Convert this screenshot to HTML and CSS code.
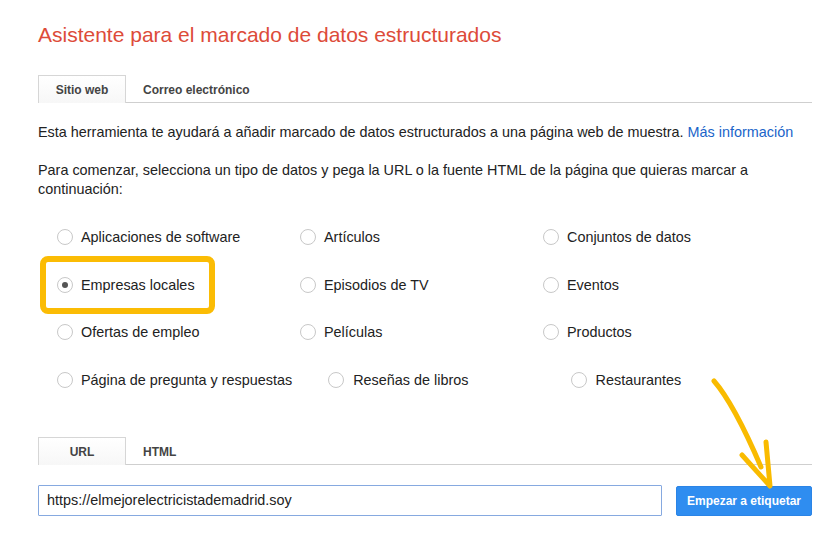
FILE: index.html
```html
<!DOCTYPE html>
<html lang="es">
<head>
<meta charset="utf-8">
<title>Asistente para el marcado de datos estructurados</title>
<link rel="stylesheet" href="styles.css">
</head>
<body>
<div class="page">
  <h1 class="title">Asistente para el marcado de datos estructurados</h1>

  <div class="tabs tabs-top">
    <div class="tab active">Sitio web</div>
    <div class="tab">Correo electrónico</div>
  </div>

  <p class="para first">Esta herramienta te ayudará a añadir marcado de datos estructurados a una página web de muestra. <a class="link" href="#">Más información</a></p>
  <p class="para">Para comenzar, selecciona un tipo de datos y pega la URL o la fuente HTML de la página que quieras marcar a continuación:</p>

  <div class="options">
    <div class="row">
      <label class="opt"><span class="radio"></span>Aplicaciones de software</label>
      <label class="opt"><span class="radio"></span>Artículos</label>
      <label class="opt"><span class="radio"></span>Conjuntos de datos</label>
    </div>
    <div class="row">
      <label class="opt highlighted"><span class="radio checked"></span>Empresas locales<span class="hl-box"></span></label>
      <label class="opt"><span class="radio"></span>Episodios de TV</label>
      <label class="opt"><span class="radio"></span>Eventos</label>
    </div>
    <div class="row">
      <label class="opt"><span class="radio"></span>Ofertas de empleo</label>
      <label class="opt"><span class="radio"></span>Películas</label>
      <label class="opt"><span class="radio"></span>Productos</label>
    </div>
    <div class="row last">
      <label class="opt"><span class="radio"></span>Página de pregunta y respuestas</label>
      <label class="opt"><span class="radio"></span>Reseñas de libros</label>
      <label class="opt"><span class="radio"></span>Restaurantes</label>
    </div>
  </div>

  <div class="tabs tabs-bottom">
    <div class="tab active">URL</div>
    <div class="tab">HTML</div>
  </div>

  <div class="url-row">
    <div class="url-input">https://elmejorelectricistademadrid.soy</div>
    <button class="btn">Empezar a etiquetar</button>
  </div>
</div>

<svg class="arrow" width="840" height="538" viewBox="0 0 840 538">
  <path d="M714 381 C728 397 743 425 761 467" fill="none" stroke="#f9bb00" stroke-width="5" stroke-linecap="round"/>
  <path d="M742 455 L770 486 L766 442" fill="none" stroke="#f9bb00" stroke-width="5" stroke-linecap="round" stroke-linejoin="round"/>
</svg>
</body>
</html>
```

FILE: styles.css
```css
html, body {
  margin: 0;
  padding: 0;
  background: #fff;
}
body {
  font-family: "Liberation Sans", Arial, sans-serif;
  font-size: 14.4px;
  color: #222;
  position: relative;
  width: 840px;
  height: 538px;
  overflow: hidden;
}
.page {
  padding: 0 28px 0 38px;
  display: flex;
  flex-direction: column;
}
.title {
  margin: 22px 0 0 0;
  font-size: 21px;
  font-weight: normal;
  line-height: 26px;
  color: #dd4b39;
}
.tabs {
  display: flex;
  border-bottom: 1px solid #cfcfcf;
  height: 27px;
}
.tabs-top {
  margin-top: 27px;
}
.tab {
  font-size: 12px;
  font-weight: bold;
  color: #444;
  line-height: 26px;
  height: 27px;
  box-sizing: border-box;
  padding: 1px 16px 0 16px;
  border: 1px solid transparent;
  border-bottom: none;
}
.tab.active {
  width: 88px;
  padding: 1px 0 0 0;
  text-align: center;
  border-color: #d6d6d6;
  background: linear-gradient(#fff, #f7f7f7);
  margin-bottom: -1px;
  height: 28px;
}
.para {
  margin: 0;
  line-height: 19px;
}
.para.first {
  margin-top: 20px;
  margin-bottom: 19px;
}
.link {
  color: #1a64c9;
  text-decoration: none;
}
.options {
  margin-top: 28px;
  padding-left: 19px;
  display: flex;
  flex-direction: column;
  gap: 27.6px;
}
.row {
  display: flex;
  height: 20px;
  align-items: center;
}
.opt {
  position: relative;
  width: 243px;
  display: flex;
  align-items: center;
  gap: 8px;
  color: #222;
  line-height: 20px;
}
.row.last .opt:first-child {
  width: 273px;
}
.row.last .opt:nth-child(2) {
  width: 244px;
}
.row.last .opt:nth-child(2),
.row.last .opt:nth-child(3) {
  gap: 9px;
}
.radio {
  width: 14px;
  height: 14px;
  border: 1px solid #c8c8c8;
  border-radius: 50%;
  background: #fff;
  display: inline-flex;
  align-items: center;
  justify-content: center;
  flex: none;
}
.radio.checked::after {
  content: "";
  width: 6px;
  height: 6px;
  border-radius: 50%;
  background: #555;
}
.hl-box {
  position: absolute;
  left: -17px;
  top: -19px;
  width: 175px;
  height: 58px;
  box-sizing: border-box;
  border: 6px solid #fbbc04;
  border-radius: 8px;
  pointer-events: none;
}
.tabs-bottom {
  margin-top: 47px;
}
.url-row {
  margin-top: 20px;
  display: flex;
  align-items: flex-start;
  gap: 14px;
}
.url-input {
  width: 624px;
  height: 31px;
  box-sizing: border-box;
  border: 1px solid #86a9e0;
  border-radius: 1px;
  padding: 0 8px;
  line-height: 29px;
  font-size: 14.4px;
  color: #222;
}
.btn {
  margin-top: 1px;
  width: 136px;
  height: 30px;
  border: 1px solid #2b84e6;
  border-radius: 2px;
  background: #2f8df0;
  color: #fff;
  font-family: "Liberation Sans", Arial, sans-serif;
  font-size: 12px;
  font-weight: bold;
  padding: 0;
}
.arrow {
  position: absolute;
  left: 0;
  top: 0;
  pointer-events: none;
}
```
